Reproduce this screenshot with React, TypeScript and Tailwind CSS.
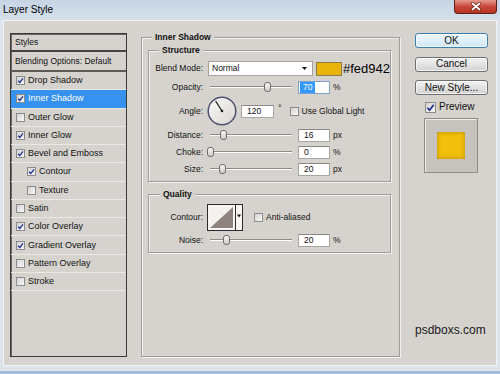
const styleItems = [
  { name: "Drop Shadow", on: true },
  { name: "Inner Shadow", on: true, active: true },
  { name: "Outer Glow", on: false },
  { name: "Inner Glow", on: true },
  { name: "Bevel and Emboss", on: true },
  { name: "Contour", on: true, sub: true },
  { name: "Texture", on: false, sub: true },
  { name: "Satin", on: false },
  { name: "Color Overlay", on: true },
  { name: "Gradient Overlay", on: true },
  { name: "Pattern Overlay", on: false },
  { name: "Stroke", on: false },
];

function CheckBox({ on, big }: { on: boolean; big?: boolean }) {
  return (
    <span
      className={`${big ? "w-[11px] h-[11px]" : "w-[9px] h-[9px]"} shrink-0 flex items-center justify-center border border-[#8b8b8b] bg-gradient-to-br from-[#d4d4d4] to-[#f7f7f7]`}
    >
      {on && (
        <svg viewBox="0 0 8 8" className={big ? "w-[9px] h-[9px]" : "w-[7px] h-[7px]"}>
          <path d="M1.2 4.2 L3.2 6.3 L6.9 1.5" fill="none" stroke="#24348c" strokeWidth="1.5" />
        </svg>
      )}
    </span>
  );
}

function Slider({ pos }: { pos: number }) {
  return (
    <div className="relative w-[82px] h-[13px] flex items-center">
      <div className="w-full h-[2px] bg-[#8f8c88] border-b border-white" />
      {/* thumb sits over the track */}
      <div
        className="absolute top-[1.5px] -ml-[3.5px] w-[7px] h-[10px] rounded-[3px] border border-[#6f6c69] bg-gradient-to-b from-[#f8f8f6] to-[#cfccc8]"
        style={{ left: `${pos}%` }}
      />
    </div>
  );
}

function NumBox({ value }: { value: string }) {
  return (
    <div className="w-[32px] h-[13px] bg-white border border-[#a9a6a2] border-t-[#8a8784] flex items-center pl-[5px] text-[8.5px] leading-none">
      {value}
    </div>
  );
}

function Label({ children }: { children: string }) {
  return <span className="w-[50px] shrink-0 text-right text-[8.5px] leading-none">{children}</span>;
}

function SliderRow({ label, pos, value, unit, className }: { label: string; pos: number; value: string; unit: string; className: string }) {
  return (
    <div className={`h-[13px] flex items-center ${className}`}>
      <Label>{label}</Label>
      <div className="ml-[7px]">
        <Slider pos={pos} />
      </div>
      <div className="ml-[6px]">
        <NumBox value={value} />
      </div>
      <span className="ml-[3px] text-[8.5px] leading-none">{unit}</span>
    </div>
  );
}

function Dial() {
  return (
    <svg width="30" height="30" viewBox="0 0 30 30" className="ml-[4px] shrink-0">
      <defs>
        <linearGradient id="dialFill" x1="0" y1="0" x2="1" y2="1">
          <stop offset="0" stopColor="#fbfaf8" />
          <stop offset="1" stopColor="#d9d6d0" />
        </linearGradient>
      </defs>
      <circle cx="15" cy="15" r="13.8" fill="url(#dialFill)" stroke="#4d5070" strokeWidth="1.5" />
      <line x1="15" y1="15" x2="8.6" y2="5" stroke="#111" strokeWidth="1.2" />
      <circle cx="15" cy="15" r="1.3" fill="#111" />
    </svg>
  );
}

function ContourBox() {
  return (
    <svg width="36" height="27" viewBox="0 0 36 27" className="ml-[4px] shrink-0">
      <rect x="0.5" y="0.5" width="35" height="26" fill="#f6f5f3" stroke="#2b2b2b" />
      <polygon points="3,3 26,3 3,24" fill="#f4f2ef" />
      <polygon points="3,24 26,3 26,24" fill="#8e837e" />
      <line x1="28.5" y1="0.5" x2="28.5" y2="26.5" stroke="#2b2b2b" />
      <polygon points="30,10.5 34,10.5 32,13.5" fill="#111" />
    </svg>
  );
}

function Button({ children, focus, className }: { children: string; focus?: boolean; className: string }) {
  return (
    <div
      className={`h-[15px] w-full rounded-[3px] border flex items-center justify-center text-[10px] leading-none shadow-[inset_0_0_0_1px_rgba(255,255,255,0.7)] ${
        focus
          ? "border-[#3c7fb1] bg-gradient-to-b from-[#f1f8fd] to-[#cfe7f7]"
          : "border-[#707070] bg-gradient-to-b from-[#f3f3f3] to-[#d2d2d2]"
      } ${className}`}
    >
      {children}
    </div>
  );
}

export default function App() {
  return (
    <div className="w-[500px] h-[374px] overflow-hidden flex flex-col bg-[#dde4ec] border-b-[3px] border-[#a4bbd8] font-['Liberation_Sans',Arial,sans-serif] text-[#111]">
      {/* Title bar */}
      <div className="h-[20px] shrink-0 flex bg-gradient-to-b from-[#c6d4e5] to-[#d6e0eb]">
        <span className="pl-[3px] self-center text-[10px] leading-none text-black">Layer Style</span>
        <div className="flex-1" />
        <div className="mr-[3px] w-[43px] h-[14px] rounded-b-[4px] border border-t-0 border-[#5e2018] bg-gradient-to-b from-[#e59a8e] via-[#c7473a] to-[#b93425] flex items-center justify-center">
          <svg width="12" height="9" viewBox="0 0 12 9">
            <path d="M2.5 1.5 L9.5 7.5 M9.5 1.5 L2.5 7.5" stroke="#5a1a12" strokeWidth="3" strokeLinecap="round" />
            <path d="M2.5 1.5 L9.5 7.5 M9.5 1.5 L2.5 7.5" stroke="#fff" strokeWidth="1.8" strokeLinecap="round" />
          </svg>
        </div>
      </div>

      {/* Client area */}
      <div className="h-[346px] mx-[3px] flex border border-[#f1f3f6] bg-[#d6d3ce]">
        {/* Styles list */}
        <div className="ml-[6px] mt-[12px] mb-[8px] w-[117px] border border-[#3b3937] shadow-[inset_1px_1px_0_#6a6764] flex flex-col">
          <div className="h-[18px] shrink-0 flex items-center pl-[4px] border-b-2 border-[#45423f] text-[8.5px] leading-none">
            Styles
          </div>
          <div className="h-[20px] shrink-0 flex items-center pl-[4px] border-b-2 border-[#5d5a56] text-[8.5px] leading-none">
            Blending Options: Default
          </div>
          {styleItems.map((s) => (
            <div
              key={s.name}
              className={`h-[18.27px] shrink-0 flex items-center gap-[3px] border-b border-[#ebe9e5] text-[9px] leading-none ${
                s.sub ? "pl-[16px]" : "pl-[5px]"
              } ${s.active ? "bg-[#3592f0] text-white" : ""}`}
            >
              <CheckBox on={s.on} />
              <span>{s.name}</span>
            </div>
          ))}
        </div>

        {/* Inner Shadow settings */}
        <fieldset className="ml-[14px] mt-[10.5px] mb-[8px] w-[257px] shrink-0 border border-[#a09c98] shadow-[1px_1px_0_#f4f2ef,inset_1px_1px_0_#f4f2ef] pl-[6px] pr-[8px] pt-[2px]">
          <legend className="ml-[4px] px-[3px] bg-[#d6d3ce] font-bold text-[8.5px] leading-[11px]">Inner Shadow</legend>

          <fieldset className="border border-[#a09c98] shadow-[1px_1px_0_#f4f2ef,inset_1px_1px_0_#f4f2ef] pl-[4px] pt-[5.5px] pb-[5px]">
            <legend className="ml-[6px] px-[3px] bg-[#d6d3ce] font-bold text-[8.5px] leading-[11px]">Structure</legend>

            <div className="h-[15px] flex items-center">
              <Label>Blend Mode:</Label>
              <div className="ml-[5px] w-[105px] h-[15px] bg-white border border-[#a5a29e] flex items-center pl-[3px] pr-[5px] text-[8.5px] leading-none">
                <span className="flex-1">Normal</span>
                <svg width="5" height="3" viewBox="0 0 5 3">
                  <polygon points="0,0 5,0 2.5,3" fill="#111" />
                </svg>
              </div>
              <div className="ml-[3px] w-[26px] h-[14px] bg-[#e8b409] border border-[#8c7c4c]" />
              <span className="ml-[1px] text-[13px] leading-none text-black">#fed942</span>
            </div>

            <div className="mt-[4.5px] h-[13px] flex items-center">
              <Label>Opacity:</Label>
              <div className="ml-[7px]">
                <Slider pos={70} />
              </div>
              <div className="ml-[6px] w-[32px] h-[13px] bg-white border border-[#7f9fcf] flex items-center pl-[1px] text-[8.5px] leading-none">
                <span className="bg-[#3399ff] text-white px-[3px] h-[11px] flex items-center">70</span>
              </div>
              <span className="ml-[3px] text-[8.5px] leading-none">%</span>
            </div>

            <div className="mt-[2.5px] h-[30px] flex items-center">
              <Label>Angle:</Label>
              <Dial />
              <div className="ml-[4px] w-[33px] h-[13px] bg-white border border-[#a9a6a2] border-t-[#8a8784] flex items-center pl-[5px] text-[8.5px] leading-none">
                120
              </div>
              <span className="ml-[4px] mb-[5px] text-[9px] leading-none">°</span>
              <div className="ml-[8px]">
                <CheckBox on={false} />
              </div>
              <span className="ml-[3px] text-[8.5px] leading-none">Use Global Light</span>
            </div>

            <SliderRow className="mt-[2.5px]" label="Distance:" pos={16} value="16" unit="px" />
            <SliderRow className="mt-[4px]" label="Choke:" pos={0} value="0" unit="%" />
            <SliderRow className="mt-[4px]" label="Size:" pos={15} value="20" unit="px" />
          </fieldset>

          <fieldset className="mt-[7px] border border-[#a09c98] shadow-[1px_1px_0_#f4f2ef,inset_1px_1px_0_#f4f2ef] pl-[4px] pt-[4.5px] pb-[5px]">
            <legend className="ml-[7px] px-[3px] bg-[#d6d3ce] font-bold text-[8.5px] leading-[11px]">Quality</legend>

            <div className="h-[26px] flex items-center">
              <Label>Contour:</Label>
              <ContourBox />
              <div className="ml-[11px]">
                <CheckBox on={false} />
              </div>
              <span className="ml-[3px] text-[8.5px] leading-none">Anti-aliased</span>
            </div>

            <SliderRow className="mt-[3.5px]" label="Noise:" pos={20} value="20" unit="%" />
          </fieldset>
        </fieldset>

        {/* Buttons and preview */}
        <div className="ml-[15px] w-[73px] flex flex-col">
          <Button focus className="mt-[12px]">OK</Button>
          <Button className="mt-[8.5px]">Cancel</Button>
          <Button className="mt-[8.5px]">New Style...</Button>
          <div className="mt-[5.5px] h-[13px] ml-[10px] flex items-center gap-[3px]">
            <CheckBox on big />
            <span className="text-[10px] leading-none">Preview</span>
          </div>
          <div className="mt-[4.5px] ml-[9px] w-[54px] h-[55px] bg-[#c6c2bd] border border-[#8f8b87] shadow-[inset_1px_1px_0_#efece8] flex items-center justify-center">
            <div className="w-[28px] h-[27px] bg-[#f1bf0c] shadow-[inset_0_0_4px_#b58a06]" />
          </div>
          <span className="mt-auto mb-[28px] text-[12px] leading-[14px] text-[#1a1a1a]">psdboxs.com</span>
        </div>
      </div>
    </div>
  );
}
